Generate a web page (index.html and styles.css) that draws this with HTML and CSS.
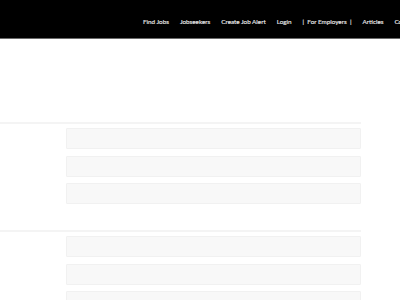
FILE: index.html
```html
<!DOCTYPE html>
<html lang="en">
<head>
    <meta charset="UTF-8">
    <meta name="viewport" content="width=device-width, initial-scale=1.0">
    <title>Create Job Alert</title>
    <link rel="stylesheet" href="styles.css">
</head>

<body>
    <header class="topbar">
        <nav class="menu">
            <a href="#">Find Jobs</a>
            <a href="#">Jobseekers</a>
            <a href="#">Create Job Alert</a>
            <a href="#">Login</a>
            <a href="#">|&nbsp; For Employers &nbsp;|</a>
            <a href="#">Articles</a>
            <a href="#">Contact</a>
        </nav>
    </header>

    <main class="page">
        <section class="form-group first">
            <div class="field"></div>
            <div class="field"></div>
            <div class="field"></div>
        </section>

        <section class="form-group">
            <div class="field"></div>
            <div class="field"></div>
            <div class="field"></div>
        </section>
    </main>
</body>
</html>
```

FILE: styles.css
```css
body {
    margin: 0;
    background-color: #fff;
    font-family: 'Lato', 'Open Sans', sans-serif;
    overflow: hidden;
}

.topbar {
    height: 39px;
    box-sizing: border-box;
    padding-top: 6px;
    background-color: #000;
    border-bottom: 1px solid #6a6a6a;
    display: flex;
    align-items: center;
    overflow: hidden;
}

.menu {
    display: flex;
    gap: 11px;
    padding-left: 143px;
    white-space: nowrap;
}

.menu a {
    color: #e8e8e8;
    text-decoration: none;
    font-size: 6.3px;
    font-weight: 400;
    line-height: 1;
    -webkit-text-stroke: 0.15px #e8e8e8;
}

.page {
    width: 361px;
    padding-top: 83px;
}

.form-group {
    border-top: 2px solid #f4f4f4;
    padding: 4px 0 26px 66px;
    display: flex;
    flex-direction: column;
    gap: 6.5px;
}

.field {
    height: 19px;
    background-color: #f8f8f8;
    border: 1px solid #f1f1f1;
    border-radius: 1px;
}
```
